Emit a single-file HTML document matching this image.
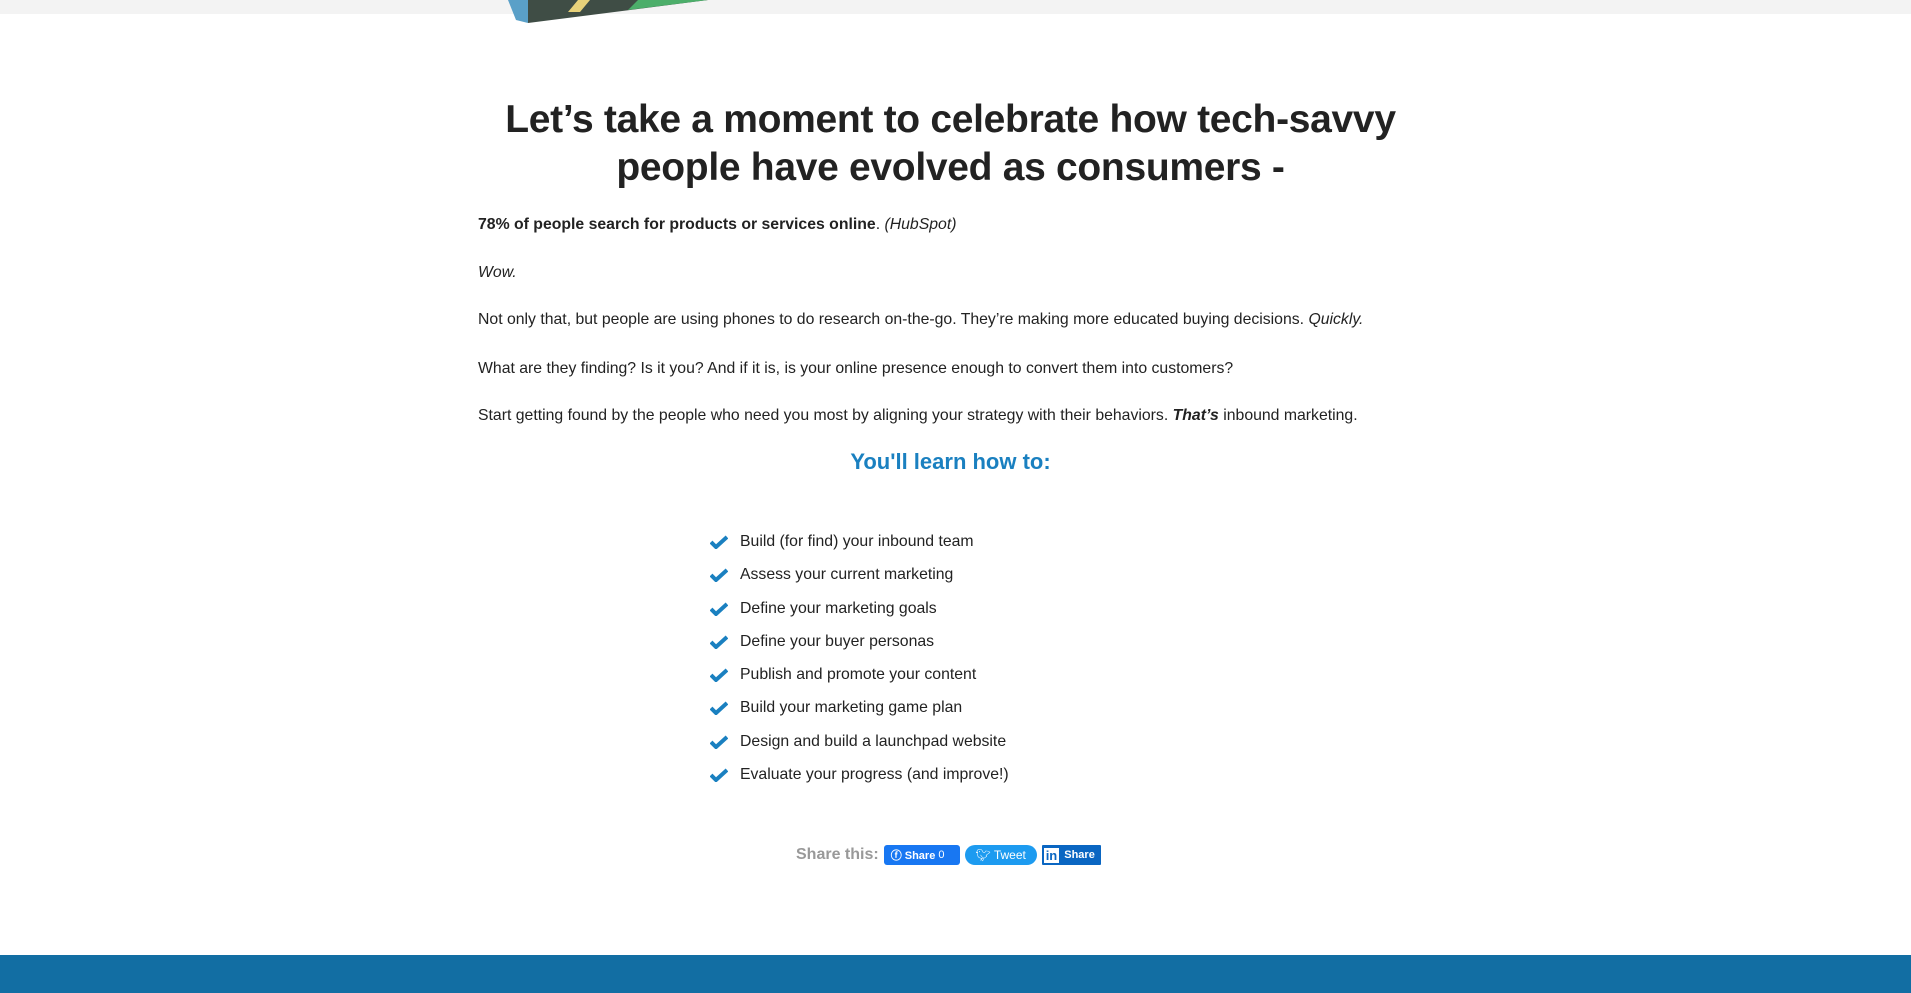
<!DOCTYPE html>
<html><head><meta charset="utf-8"><style>
body{margin:0;background:#fff;font-family:"Liberation Sans",sans-serif;color:#222;width:1911px;height:993px;overflow:hidden;position:relative}
.top{position:absolute;left:0;top:0;width:1911px;height:14px;background:#f3f3f3}
.box{position:absolute;left:508px;top:0;width:200px;height:24px}
h1{position:absolute;left:378px;width:1145px;top:96px;margin:0;text-align:center;font-size:39px;line-height:48px;font-weight:bold;color:#222;letter-spacing:-0.3px;white-space:nowrap}
p{position:absolute;left:478px;margin:0;font-size:15.8px;line-height:20px;white-space:nowrap}
.learn{position:absolute;left:478px;width:945px;top:449px;text-align:center;color:#1a80c0;font-weight:bold;font-size:22px}
ul{position:absolute;left:710px;top:531px;margin:0;padding:0;list-style:none}
li{height:33.3px;font-size:15.8px;position:relative;padding-left:30px;line-height:22px}
li svg{position:absolute;left:0;top:4px}
.share{position:absolute;left:796px;top:845px;font-size:16px;color:#999;font-weight:bold;display:flex;align-items:center;gap:5px}
.btn{color:#fff;font-size:11px;font-weight:bold;height:20px;display:flex;align-items:center;padding:0 7px;border-radius:3px}
.foot{position:absolute;left:0;top:955px;width:1911px;height:38px;background:#126ea3}
</style></head><body>
<div class="top"></div>
<svg class="box" viewBox="0 0 200 24"><polygon points="0,0 20,0 20,23 8,20" fill="#5aa0c8"/><polygon points="20,0 200,0 20,23" fill="#3f4d45"/><polygon points="70,0 82,0 72,12 60,12" fill="#e8d27a"/><polygon points="130,0 200,0 120,10" fill="#4cae6a"/></svg>
<h1>Let’s take a moment to celebrate how tech-savvy<br>people have evolved as consumers -</h1>
<p style="top:215px"><b>78% of people search for products or services online</b>. <i>(HubSpot)</i></p>
<p style="top:263px"><i>Wow.</i></p>
<p style="top:310px">Not only that, but people are using phones to do research on-the-go. They’re making more educated buying decisions. <i>Quickly.</i></p>
<p style="top:359px">What are they finding? Is it you? And if it is, is your online presence enough to convert them into customers?</p>
<p style="top:406px">Start getting found by the people who need you most by aligning your strategy with their behaviors. <b><i>That’s</i></b> inbound marketing.</p>
<div class="learn">You'll learn how to:</div>
<ul>
<li><svg width="18" height="14" viewBox="0 0 18 14"><path d="M1 7l5 5L17 2" stroke="#1a80c0" stroke-width="4" fill="none"/></svg>Build (for find) your inbound team</li>
<li><svg width="18" height="14" viewBox="0 0 18 14"><path d="M1 7l5 5L17 2" stroke="#1a80c0" stroke-width="4" fill="none"/></svg>Assess your current marketing</li>
<li><svg width="18" height="14" viewBox="0 0 18 14"><path d="M1 7l5 5L17 2" stroke="#1a80c0" stroke-width="4" fill="none"/></svg>Define your marketing goals</li>
<li><svg width="18" height="14" viewBox="0 0 18 14"><path d="M1 7l5 5L17 2" stroke="#1a80c0" stroke-width="4" fill="none"/></svg>Define your buyer personas</li>
<li><svg width="18" height="14" viewBox="0 0 18 14"><path d="M1 7l5 5L17 2" stroke="#1a80c0" stroke-width="4" fill="none"/></svg>Publish and promote your content</li>
<li><svg width="18" height="14" viewBox="0 0 18 14"><path d="M1 7l5 5L17 2" stroke="#1a80c0" stroke-width="4" fill="none"/></svg>Build your marketing game plan</li>
<li><svg width="18" height="14" viewBox="0 0 18 14"><path d="M1 7l5 5L17 2" stroke="#1a80c0" stroke-width="4" fill="none"/></svg>Design and build a launchpad website</li>
<li><svg width="18" height="14" viewBox="0 0 18 14"><path d="M1 7l5 5L17 2" stroke="#1a80c0" stroke-width="4" fill="none"/></svg>Evaluate your progress (and improve!)</li>
</ul>
<div class="share">Share this:
<span class="btn" style="background:#1877f2;width:62px">ⓕ&nbsp;Share&nbsp;<span style="font-weight:normal">0</span></span>
<span class="btn" style="background:#1d9bf0;border-radius:10px;font-weight:normal;font-size:12px;width:58px;justify-content:center">🐦︎ Tweet</span>
<span class="btn" style="background:#0a66c2;border-radius:1px;padding:0 6px 0 2px"><span style="background:#fff;color:#0a66c2;padding:0 2px;margin-right:5px;font-size:13px">in</span>Share</span>
</div>
<div class="foot"></div>
</body></html>
